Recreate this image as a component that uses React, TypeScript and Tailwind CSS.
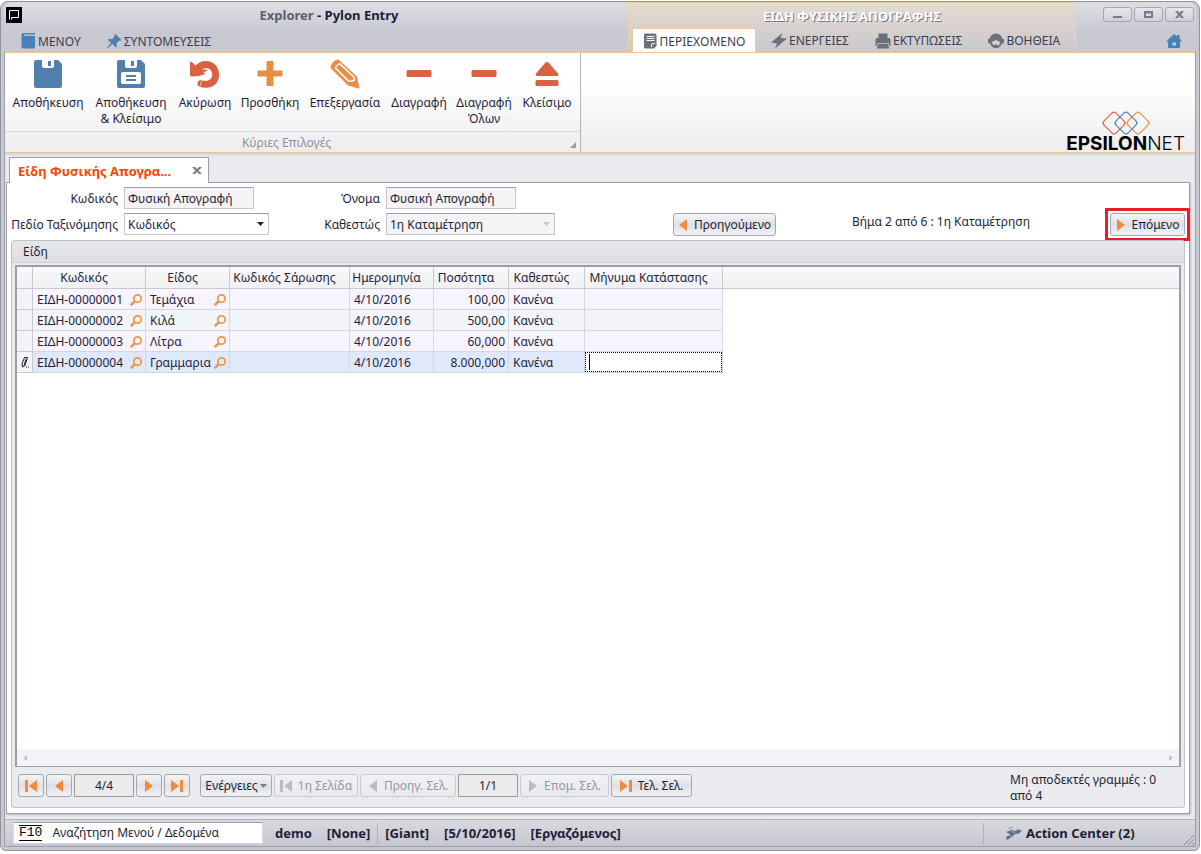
import type { ReactNode } from "react";
import clsx from "clsx";

interface Item {
  code: string;
  kind: string;
  date: string;
  quantity: string;
  status: string;
}

const items: Item[] = [
  { code: "ΕΙΔΗ-00000001", kind: "Τεμάχια", date: "4/10/2016", quantity: "100,00", status: "Κανένα" },
  { code: "ΕΙΔΗ-00000002", kind: "Κιλά", date: "4/10/2016", quantity: "500,00", status: "Κανένα" },
  { code: "ΕΙΔΗ-00000003", kind: "Λίτρα", date: "4/10/2016", quantity: "60,000", status: "Κανένα" },
  { code: "ΕΙΔΗ-00000004", kind: "Γραμμαρια", date: "4/10/2016", quantity: "8.000,000", status: "Κανένα" },
];

const columns = [
  "Κωδικός",
  "Είδος",
  "Κωδικός Σάρωσης",
  "Ημερομηνία",
  "Ποσότητα",
  "Καθεστώς",
  "Μήνυμα Κατάστασης",
];

export default function App() {
  return (
    <div className="flex min-h-screen flex-col bg-white pt-px pr-px pb-[3px] font-['Noto_Sans','Open_Sans',sans-serif] text-[12px] leading-4 text-[#1e1e38]">
      <div className="flex flex-1 flex-col rounded-t-lg rounded-b-md border border-[#8f959e] bg-[#c8c8d1] pr-[3px] pb-[3px] pl-[3px]">
        <WindowHeader />
        <div className="flex flex-1 flex-col border-x border-b border-[#9d9dab] bg-[#eaebef]">
          <Ribbon />
          <main className="flex flex-1 flex-col pt-1 pr-[5px] pb-[5px] pl-px shadow-[inset_0_2px_2px_#d4d5da]">
            <DocumentTab />
            <section className="-mt-px flex flex-1 flex-col border border-[#9d9dab] bg-white px-1 pt-1 pb-[5px] shadow-[1px_1px_2px_#bbbcc4]">
              <FilterForm />
              <ItemsGroup />
            </section>
          </main>
          <StatusBar />
        </div>
      </div>
    </div>
  );
}

function WindowHeader() {
  return (
    <header className="flex h-[50px] rounded-t-lg bg-linear-to-b from-[#dbdce0] from-10% to-[#c8c8d1] to-60%">
      <div className="flex flex-1 flex-col">
        <div className="flex h-[26px] items-center pl-0.5">
          <AppLogo />
          <h1 className="flex-1 pl-2 text-center text-[13px] font-bold">
            <span className="text-[#5c5c74]">Explorer</span> - Pylon Entry
          </h1>
        </div>
        <nav className="flex flex-1 items-center gap-[26px] pt-0.5 pl-[17px] text-[#3c3c50]">
          <MenuTab icon={<BookIcon />}>ΜΕΝΟΥ</MenuTab>
          <MenuTab icon={<PinIcon />}>ΣΥΝΤΟΜΕΥΣΕΙΣ</MenuTab>
        </nav>
      </div>
      <div className="flex w-[448px] flex-col border-x border-t border-x-[#ecd2a8] border-t-[#eccb94] bg-linear-to-b from-[#e6dbd0] to-[#c9c8cd]">
        <div className="flex h-[25px] items-center justify-center text-[13px] font-bold text-white [text-shadow:1px_1px_0_#77777f]">
          ΕΙΔΗ ΦΥΣΙΚΗΣ ΑΠΟΓΡΑΦΗΣ
        </div>
        <nav className="flex flex-1 items-stretch pl-[3px] text-[#3c3c50]">
          <div className="mr-0.5 -mb-px flex w-[124px] justify-center border border-b-0 border-[#eccb94] bg-white">
            <MenuTab icon={<NoteIcon />}>ΠΕΡΙΕΧΟΜΕΝΟ</MenuTab>
          </div>
          <div className="flex items-stretch gap-[26px] pt-px pl-[13px]">
            <MenuTab icon={<BoltIcon />}>ΕΝΕΡΓΕΙΕΣ</MenuTab>
            <MenuTab icon={<PrinterIcon />}>ΕΚΤΥΠΩΣΕΙΣ</MenuTab>
            <MenuTab icon={<HelpIcon />}>ΒΟΗΘΕΙΑ</MenuTab>
          </div>
        </nav>
      </div>
      <div className="flex w-[120px] flex-col items-end justify-between pt-[5px] pr-0.5 pb-[3px]">
        <div className="flex gap-0.5">
          <WindowButton label="Ελαχιστοποίηση">
            <path d="M10 9h9v2h-9z" />
          </WindowButton>
          <WindowButton label="Μεγιστοποίηση">
            <path fillRule="evenodd" d="M10 4h9v7h-9zM12 6.500v2.500h5v-2.500z" />
          </WindowButton>
          <WindowButton label="Κλείσιμο παραθύρου">
            <path d="M10 4h3l1.500 2 1.500-2h3l-3 3.500 3 3.500h-3l-1.500-2-1.500 2h-3l3-3.500z" />
          </WindowButton>
        </div>
        <button aria-label="Αρχική" className="mr-3">
          <svg className="h-4 w-4" viewBox="0 0 16 16" fill="#4a80b8">
            <path fillRule="evenodd" d="M8 1l3 2.500V2h2.500v3.500l2.500 3h-2V14a1 1 0 0 1-1 1H3a1 1 0 0 1-1-1V8.500H0zM6.500 9.500v3h3.500v-3z" />
          </svg>
        </button>
      </div>
    </header>
  );
}

function MenuTab({ icon, children }: { icon: ReactNode; children: ReactNode }) {
  return (
    <button className="flex items-center gap-0.5 whitespace-nowrap">
      {icon}
      <span className="pt-px">{children}</span>
    </button>
  );
}

function WindowButton({ label, children }: { label: string; children: ReactNode }) {
  return (
    <button
      aria-label={label}
      className="h-[15px] w-[29px] rounded-[3px] border border-[#a6a6b2] bg-linear-to-b from-[#e6e7ea] to-[#cfcfd6]"
    >
      <svg className="-mt-px -ml-px h-[15px] w-[29px]" viewBox="0 0 29 15" fill="#7b7b8b">
        {children}
      </svg>
    </button>
  );
}

function Ribbon() {
  return (
    <div className="flex h-[101px] border-y border-[#eac48c] bg-linear-to-b from-white from-30% to-[#ededef]">
      <div className="flex w-[576px] flex-col border-r border-[#b4b4c0]">
        <div className="flex h-[79px] items-start border-b border-[#d9d9de] pt-[7px] pl-0.5">
          <RibbonButton width="w-[82px]" icon={<SaveIcon />} label="Αποθήκευση" />
          <RibbonButton width="w-[84px]" icon={<SaveCloseIcon />} label="Αποθήκευση & Κλείσιμο" />
          <RibbonButton width="w-[64px]" icon={<UndoIcon />} label="Ακύρωση" />
          <RibbonButton width="w-[66px]" icon={<PlusIcon />} label="Προσθήκη" />
          <RibbonButton width="w-[84px]" icon={<PencilIcon />} label="Επεξεργασία" />
          <RibbonButton width="w-[64px]" icon={<MinusIcon />} label="Διαγραφή" />
          <RibbonButton width="w-[66px]" icon={<MinusIcon />} label="Διαγραφή Όλων" />
          <RibbonButton width="w-[60px]" icon={<EjectIcon />} label="Κλείσιμο" />
        </div>
        <div className="relative flex flex-1 items-center justify-center pt-px pr-3 text-[#8f8f9c]">
          Κύριες Επιλογές
          <svg className="absolute right-1 bottom-1 h-[6px] w-[6px]" viewBox="0 0 6 6" fill="#9a9aa6">
            <path d="M6 0v6H0z" />
          </svg>
        </div>
      </div>
      <div className="flex flex-1 items-end justify-end pr-2.5">
        <Brand />
      </div>
    </div>
  );
}

function RibbonButton({ width, icon, label }: { width: string; icon: ReactNode; label: string }) {
  return (
    <button className={clsx("flex flex-col items-center gap-[7px] px-1.5", width)}>
      {icon}
      <span>{label}</span>
    </button>
  );
}

function Brand() {
  return (
    <div className="flex flex-col items-center">
      <svg className="h-[26px] w-[50px]" viewBox="0 0 50 26" fill="none" strokeWidth="1.200">
        <rect x="4.500" y="4.500" width="17" height="17" rx="3" transform="rotate(45 13 13)" stroke="#d96243" />
        <rect x="28.500" y="4.500" width="17" height="17" rx="3" transform="rotate(45 37 13)" stroke="#e88f44" />
        <rect x="16.500" y="4.500" width="17" height="17" rx="3" transform="rotate(45 25 13)" stroke="#4a80b8" />
      </svg>
      <div className="font-['Inter',sans-serif] text-[19px] leading-4 text-black">
        <span className="font-bold">EPSILON</span>
        <span className="font-light">NET</span>
      </div>
    </div>
  );
}

function DocumentTab() {
  return (
    <div className="relative ml-[3px] flex h-[26px] w-[200px] items-center justify-between border border-b-0 border-[#9d9dab] bg-white pr-1.5 pl-2">
      <span className="text-[13px] font-bold text-[#ff4500]">Είδη Φυσικής Απογρα...</span>
      <button aria-label="Κλείσιμο καρτέλας">
        <svg className="h-[9px] w-[10px]" viewBox="0 0 10 9" fill="#7b7b8b">
          <path d="M0 1h3l2 2 2-2h3L6.500 4.500 10 8H7L5 6 3 8H0l3.500-3.500z" />
        </svg>
      </button>
    </div>
  );
}

const fieldStyle = "h-[22px] border border-[#c4c4cd] border-t-[#9d9dab] pt-px pl-[3px] text-[#1e1e38] outline-none";

function FilterForm() {
  return (
    <div className="flex items-end">
      <div className="grid grid-cols-[107px_145px_105px_169px] items-center gap-x-1.5 gap-y-1 text-right">
        <label htmlFor="code" className="pt-px">
          Κωδικός
        </label>
        <input id="code" readOnly value="Φυσική Απογραφή" className={clsx(fieldStyle, "w-[130px] bg-[#f4f4f7]")} />
        <label htmlFor="name" className="pt-px">
          Όνομα
        </label>
        <input id="name" readOnly value="Φυσική Απογραφή" className={clsx(fieldStyle, "w-[130px] bg-[#f4f4f7]")} />
        <label htmlFor="sort" className="pt-px whitespace-nowrap">
          Πεδίο Ταξινόμησης
        </label>
        <Dropdown id="sort" value="Κωδικός" />
        <label htmlFor="status" className="pt-px">
          Καθεστώς
        </label>
        <Dropdown id="status" value="1η Καταμέτρηση" disabled />
      </div>
      <div className="flex h-[22px] flex-1 items-start pl-[118px]">
        <PushButton width="w-[103px]" icon={<Arrow dir="left" />}>
          Προηγούμενο
        </PushButton>
        <p className="pl-[76px] leading-[18px]">Βήμα 2 από 6 : 1η Καταμέτρηση</p>
      </div>
      <div className="h-[22px]">
        <div className="outline-3 outline-offset-2 outline-[#ed1c24]">
          <PushButton width="w-[75px]" icon={<Arrow dir="right" />}>
            Επόμενο
          </PushButton>
        </div>
      </div>
    </div>
  );
}

function Dropdown({ id, value, disabled }: { id: string; value: string; disabled?: boolean }) {
  return (
    <div className="relative flex">
      <select
        id={id}
        disabled={disabled}
        className={clsx(fieldStyle, "w-full appearance-none opacity-100", disabled ? "bg-[#f4f4f7]" : "bg-white")}
      >
        <option>{value}</option>
      </select>
      <svg
        className={clsx("pointer-events-none absolute top-[9px] right-[5px] h-1 w-[7px]", disabled ? "fill-[#c4c4cd]" : "fill-[#1e1e38]")}
        viewBox="0 0 7 4"
      >
        <path d="M0 0h7L3.500 4z" />
      </svg>
    </div>
  );
}

interface PushButtonProps {
  width: string;
  icon?: ReactNode;
  label?: string;
  disabled?: boolean;
  children?: ReactNode;
}

function PushButton({ width, icon, label, disabled, children }: PushButtonProps) {
  return (
    <button
      aria-label={label}
      disabled={disabled}
      className={clsx(
        "flex h-[23px] items-center justify-center gap-1.5 rounded-[3px] border bg-linear-to-b whitespace-nowrap",
        disabled
          ? "border-[#c9cad1] from-[#f0f1f4] to-[#e9eaee] text-[#9696a2]"
          : "border-[#a6a6b2] from-[#f4f5f7] via-[#e0e1e7] to-[#f1f1f5]",
        width,
      )}
    >
      {icon}
      {children}
    </button>
  );
}

function ItemsGroup() {
  return (
    <div className="mt-[5px] flex flex-1 flex-col rounded-[3px] border border-[#c0c0ca] bg-[#eaebef]">
      <h2 className="h-[22px] border-b border-[#cfd0d6] bg-linear-to-b from-[#e6e7ea] to-[#dedfe3] pl-[11px] leading-[21px]">
        Είδη
      </h2>
      <div className="mx-[3px] mt-0.5 flex flex-1 flex-col border-2 border-b border-[#9d9dab] bg-white">
        <ItemsTable />
        <div className="mt-auto flex h-[17px] items-center justify-between bg-[#f4f4f7] px-1.5">
          <Arrow dir="left" small />
          <Arrow dir="right" small />
        </div>
      </div>
      <Pager />
    </div>
  );
}

function ItemsTable() {
  return (
    <table className="w-full table-fixed border-separate border-spacing-0">
      <colgroup>
        <col className="w-[16px]" />
        <col className="w-[113px]" />
        <col className="w-[84px]" />
        <col className="w-[120px]" />
        <col className="w-[84px]" />
        <col className="w-[75px]" />
        <col className="w-[76px]" />
        <col className="w-[138px]" />
        <col />
      </colgroup>
      <thead>
        <tr className="h-[22px] bg-linear-to-b from-[#f9f9fa] to-[#eff0f3]">
          <th className="border-r border-b border-[#c9cad1]" />
          {columns.map((name) => (
            <th key={name} className="border-r border-b border-[#c9cad1] pr-2.5 text-center font-normal whitespace-nowrap">
              {name}
            </th>
          ))}
          <th className="border-b border-[#c9cad1]" />
        </tr>
      </thead>
      <tbody>
        {items.map((item, i) => (
          <ItemRow key={item.code} item={item} odd={i % 2 === 0} editing={i === items.length - 1} />
        ))}
      </tbody>
    </table>
  );
}

function ItemRow({ item, odd, editing }: { item: Item; odd: boolean; editing: boolean }) {
  const cell = clsx(
    "border-r border-b border-[#d5d6de] pt-0.5 pr-[3px] pl-1 whitespace-nowrap",
    editing ? "bg-[#e0e9fc]" : odd ? "bg-[#f7f4fd]" : "bg-[#f1f5fa]",
  );
  return (
    <tr className="h-[21px]">
      <td className="border-r border-b border-[#c9cad1] bg-[#f4f4f7] pl-1">{editing && <EditMark />}</td>
      <td className={cell}>
        <Lookup>{item.code}</Lookup>
      </td>
      <td className={cell}>
        <Lookup>{item.kind}</Lookup>
      </td>
      <td className={cell} />
      <td className={cell}>{item.date}</td>
      <td className={clsx(cell, "text-right")}>{item.quantity}</td>
      <td className={cell}>{item.status}</td>
      {editing ? (
        <td className="border-r border-b border-[#d5d6de] bg-white">
          <div className="flex h-5 items-center border border-dotted border-black pl-[3px]">
            <span className="h-4 w-px bg-black" />
            <input aria-label="Μήνυμα Κατάστασης" className="w-full min-w-0 outline-none" />
          </div>
        </td>
      ) : (
        <td className={cell} />
      )}
      <td />
    </tr>
  );
}

function Lookup({ children }: { children: ReactNode }) {
  return (
    <div className="flex items-center justify-between">
      {children}
      <button aria-label="Αναζήτηση">
        <svg className="h-3 w-3" viewBox="0 0 12 12" fill="none" stroke="#ee944a">
          <circle cx="7.500" cy="4.500" r="3.700" strokeWidth="1.700" />
          <path d="M4.800 7.200L.8 11.200" strokeWidth="2.500" />
        </svg>
      </button>
    </div>
  );
}

function Pager() {
  return (
    <div className="flex h-10 items-start gap-0.5 pt-[7px] pr-3.5 pl-1.5">
      <PushButton width="w-[26px]" label="Πρώτη εγγραφή" icon={<Arrow dir="left" bar />} />
      <PushButton width="w-[26px]" label="Προηγούμενη εγγραφή" icon={<Arrow dir="left" />} />
      <Counter label="Εγγραφή" value="4/4" />
      <PushButton width="w-[26px]" label="Επόμενη εγγραφή" icon={<Arrow dir="right" />} />
      <PushButton width="w-[26px]" label="Τελευταία εγγραφή" icon={<Arrow dir="right" bar />} />
      <div className="w-1.5" />
      <button className="flex h-[23px] w-[72px] items-center justify-center gap-0.5 rounded-[3px] border border-[#a6a6b2] bg-linear-to-b from-[#f4f5f7] via-[#e0e1e7] to-[#f1f1f5]">
        Ενέργειες
        <svg className="h-1 w-[7px]" viewBox="0 0 7 4" fill="#7b7b8b">
          <path d="M0 0h7L3.500 4z" />
        </svg>
      </button>
      <PushButton width="w-[84px]" icon={<Arrow dir="left" bar muted />} disabled>
        1η Σελίδα
      </PushButton>
      <PushButton width="w-[96px]" icon={<Arrow dir="left" muted />} disabled>
        Προηγ. Σελ.
      </PushButton>
      <Counter label="Σελίδα" value="1/1" />
      <PushButton width="w-[89px]" icon={<Arrow dir="right" muted />} disabled>
        Επομ. Σελ.
      </PushButton>
      <PushButton width="w-[81px]" icon={<Arrow dir="right" bar />}>
        Τελ. Σελ.
      </PushButton>
      <p className="-mt-0.5 ml-auto w-[160px]">Μη αποδεκτές γραμμές : 0 από 4</p>
    </div>
  );
}

function Counter({ label, value }: { label: string; value: string }) {
  return (
    <input
      aria-label={label}
      readOnly
      value={value}
      className="h-[23px] w-[60px] border border-[#9c9c9c] bg-[#ebebec] text-center outline-none"
    />
  );
}

function StatusBar() {
  return (
    <footer className="flex h-[27px] items-center border-t border-[#b4b4c0] bg-linear-to-b from-[#d9dade] to-[#c6c6cf] pl-2 text-[13px] font-bold">
      <div className="flex h-[22px] w-[250px] items-center gap-2.5 border border-[#d5d6de] border-t-[#9d9dab] bg-white px-[5px] text-[12px] font-normal">
        <label htmlFor="search" className="border-y border-black font-['Liberation_Mono',monospace] text-[13px] leading-[14px] text-black">
          F10
        </label>
        <input id="search" readOnly value="Αναζήτηση Μενού / Δεδομένα" className="min-w-0 flex-1 outline-none" />
      </div>
      <div className="flex flex-1 items-center gap-[15px] pl-3">
        <span>demo</span>
        <span>[None]</span>
        <span className="-ml-2 h-[21px] border-l border-[#b0b0bb]" />
        <span className="-ml-2">[Giant]</span>
        <span>[5/10/2016]</span>
        <span>[Εργαζόμενος]</span>
      </div>
      <div className="flex h-[21px] w-[200px] items-center border-l border-[#b0b0bb] pl-[22px]">
        <button className="flex items-center gap-1">
          <ActionIcon />
          Action Center (2)
        </button>
      </div>
      <svg className="h-3 w-3 self-end" viewBox="0 0 12 12" stroke="#8c8c9a">
        <path d="M1 11L11 1M5 11l6-6M9 11l2-2" />
      </svg>
    </footer>
  );
}

function Arrow({ dir, bar, muted, small }: { dir: "left" | "right"; bar?: boolean; muted?: boolean; small?: boolean }) {
  const flipped = dir === "right";
  if (small) {
    return (
      <svg className={clsx("h-[6px] w-1", flipped && "rotate-180")} viewBox="0 0 4 6" fill="#c4c4cd">
        <path d="M4 0v6L0 3z" />
      </svg>
    );
  }
  return (
    <svg
      className={clsx("h-3 shrink-0", bar ? "w-3" : "w-[10px]", flipped && "rotate-180", muted ? "fill-[#bbbcc0]" : "fill-[#f08c3c]")}
      viewBox={bar ? "0 0 12 12" : "0 0 10 12"}
    >
      {bar && <path d="M0 0h3v12H0z" />}
      <path d={bar ? "M12 0v12L4 6z" : "M9 0v12L1 6z"} />
    </svg>
  );
}

function AppLogo() {
  return (
    <svg className="h-4 w-4" viewBox="0 0 16 16">
      <path d="M0 0h16v16H0z" />
      <path d="M3.500 12.500v-9h9v7h-7v2" fill="none" stroke="#fff" />
    </svg>
  );
}

function BookIcon() {
  return (
    <svg className="h-4 w-[15px]" viewBox="0 0 15 16">
      <path d="M2.500 0H14v1.500H3V3h11v11.500a1 1 0 0 1-1 1H2.500a2 2 0 0 1-2-2V2a2 2 0 0 1 2-2z" fill="#4a80b8" />
      <path d="M3.500 2.200H14" stroke="#9dbbd8" />
    </svg>
  );
}

function PinIcon() {
  return (
    <svg className="h-4 w-[15px]" viewBox="0 0 15 16" fill="#5180ad">
      <path d="M8.500 1l6 6-1 1-1.500-.3-2.500 2.500.5 3-1.500 1-3.200-3.200L1 15l-1 .2.200-1L4 9.700.800 7l1-1.300 3.500.3L7.500 3.500 7.300 2z" />
    </svg>
  );
}

function NoteIcon() {
  return (
    <svg className="h-4 w-[15px]" viewBox="0 0 15 16">
      <path d="M2.500.5h9.500a1.500 1.500 0 0 1 1.500 1.500v8.500L8.500 15.500h-6A1.500 1.500 0 0 1 1 14V2A1.500 1.500 0 0 1 2.500.5z" fill="#69717a" />
      <path d="M13.500 10v3L11 15.500H8z" fill="#69717a" />
      <path d="M3.500 3.500h8M3.500 5.500h8M3.500 7.500h8" stroke="#fff" />
      <path d="M8.500 14v-2a1.500 1.500 0 0 1 1.500-1.500h2" fill="none" stroke="#fff" />
    </svg>
  );
}

function BoltIcon() {
  return (
    <svg className="h-4 w-4" viewBox="0 0 16 16" fill="#69717a">
      <path d="M11.500 0L9.500 5l6.500.500L4 15.500l2-5L0 9.500z" />
    </svg>
  );
}

function PrinterIcon() {
  return (
    <svg className="h-4 w-4" viewBox="0 0 16 16">
      <path d="M3.500.5h9V5H14a1.500 1.500 0 0 1 1.500 1.500V13h-1.500v2.500h-12V13H.5V6.500A1.500 1.500 0 0 1 2 5h1.500z" fill="#69717a" />
      <path d="M2.500 13.500v-3h11v3" stroke="#b4b6bb" fill="none" />
    </svg>
  );
}

function HelpIcon() {
  return (
    <svg className="h-4 w-4" viewBox="0 0 16 16">
      <circle cx="8" cy="7" r="6.500" fill="#69717a" />
      <circle cx="8" cy="9.500" r="5.800" fill="#69717a" />
      <path d="M0 6h3v4.500H1.500A1.500 1.500 0 0 1 0 9zM16 6h-3v4.500h1.500A1.500 1.500 0 0 0 16 9z" fill="#69717a" />
      <path d="M4 8.500c2 0 3.500-.8 4-2 1 1.500 2.500 2 4 2.200 0 2.800-1.500 4-2.500 4.300V11.500H7l-.5 1C5 12 4 10.500 4 8.500z" fill="#d4d3d7" />
    </svg>
  );
}

function SaveIcon() {
  return (
    <svg className="h-[28px] w-[28px]" viewBox="0 0 28 28" fill="#5180ad">
      <path fillRule="evenodd" d="M2 0h6v6a2 2 0 0 0 2 2h8a2 2 0 0 0 2-2V0h4l4 4v22a2 2 0 0 1-2 2H2a2 2 0 0 1-2-2V2a2 2 0 0 1 2-2zM14 1h3v5h-3z" />
    </svg>
  );
}

function SaveCloseIcon() {
  return (
    <svg className="h-[28px] w-[28px]" viewBox="0 0 28 28" fill="#5180ad">
      <path fillRule="evenodd" d="M2 0h6v6a2 2 0 0 0 2 2h8a2 2 0 0 0 2-2V0h4l4 4v22a2 2 0 0 1-2 2H2a2 2 0 0 1-2-2V2a2 2 0 0 1 2-2zM14 1h3v5h-3zM6 12a2 2 0 0 0-2 2v8a2 2 0 0 0 2 2h16a2 2 0 0 0 2-2v-8a2 2 0 0 0-2-2z" />
      <path d="M9 15h10v2H9zM9 19h10v2H9z" />
    </svg>
  );
}

function UndoIcon() {
  return (
    <svg className="h-[28px] w-[30px]" viewBox="0 0 30 28">
      <path d="M8 8C12 3.500 19.500 3 23.500 8c4 5.500 2.500 14-4.500 15.800-3 .7-5.500.5-8-.3" fill="none" stroke="#d96243" strokeWidth="7" />
      <path
        d="M0 3q0-2 2-1l3 3 7 4.500q4-1 5.500 1.500-3 0-4 1.500l2 1.500q-6 2.500-14 2.500-1.500 0-1.500-2zM11.500 20c-4.500 0-5.500 5-2 6.700z"
        fill="#d96243"
      />
    </svg>
  );
}

function PlusIcon() {
  return (
    <svg className="h-[28px] w-[26px]" viewBox="0 0 26 28" fill="#e88f44">
      <path d="M10.500 1h5a1 1 0 0 1 1 1v8.500H24.500a1 1 0 0 1 1 1v4a1 1 0 0 1-1 1H16.500V25a1 1 0 0 1-1 1h-5a1 1 0 0 1-1-1v-8.500H1.500a1 1 0 0 1-1-1v-4a1 1 0 0 1 1-1H9.500V2a1 1 0 0 1 1-1z" />
    </svg>
  );
}

function PencilIcon() {
  return (
    <svg className="h-[30px] w-[30px] -mt-px -mb-px" viewBox="0 0 30 30" stroke="#e88f44" strokeLinejoin="round">
      <path d="M1.500 8.500Q2.500 3 8 1.500L26 18l2.500 10.500L18.500 25.500z" fill="#e88f44" strokeWidth="2" />
      <path d="M3 9L8.500 3.500" stroke="#fdfdfd" strokeWidth="0" />
      <path d="M5 8.500L19 22.500M9.500 4.500L24 18M24 18v3.500l-5 1" fill="none" stroke="#fdfdfd" strokeWidth="1.700" />
      <path d="M5 8.500l4.500-4" stroke="#fdfdfd" strokeWidth="1.200" />
    </svg>
  );
}

function MinusIcon() {
  return (
    <svg className="h-[28px] w-[26px]" viewBox="0 0 26 28" fill="#d96243">
      <rect x="0.500" y="10" width="25" height="7" rx="1.500" />
    </svg>
  );
}

function EjectIcon() {
  return (
    <svg className="h-[28px] w-[24px]" viewBox="0 0 24 28" fill="#d96243">
      <path d="M10.500 2.500q1.500-1 3 0L23 13.500q1 2.500-1 2.500H2q-2 0-1-2.500z" />
      <rect x="0.500" y="20" width="23" height="6" rx="1.500" />
    </svg>
  );
}

function EditMark() {
  return (
    <svg className="h-3 w-[9px]" viewBox="0 0 9 12" fill="none" stroke="#1e1e38">
      <path d="M3.500 1.500h3L4 9.500l-2.500 1.500L1 8zM5 3L3 9.500M5 11h1M7 11h1" />
    </svg>
  );
}

function ActionIcon() {
  return (
    <svg className="h-[14px] w-4" viewBox="0 0 16 14">
      <path d="M2 2l4-1.500 2 1-5 2z" fill="#a8adb5" />
      <path d="M0 6l6-2 4 1 2-2 1 1 3 .5-3 3-4 .5-3 3-5 3-1-3 4-2-1-1.500z" fill="#587088" />
      <path d="M6 5.500l3 1M4 9.500l2 1.500" stroke="#b9c2cc" />
    </svg>
  );
}
